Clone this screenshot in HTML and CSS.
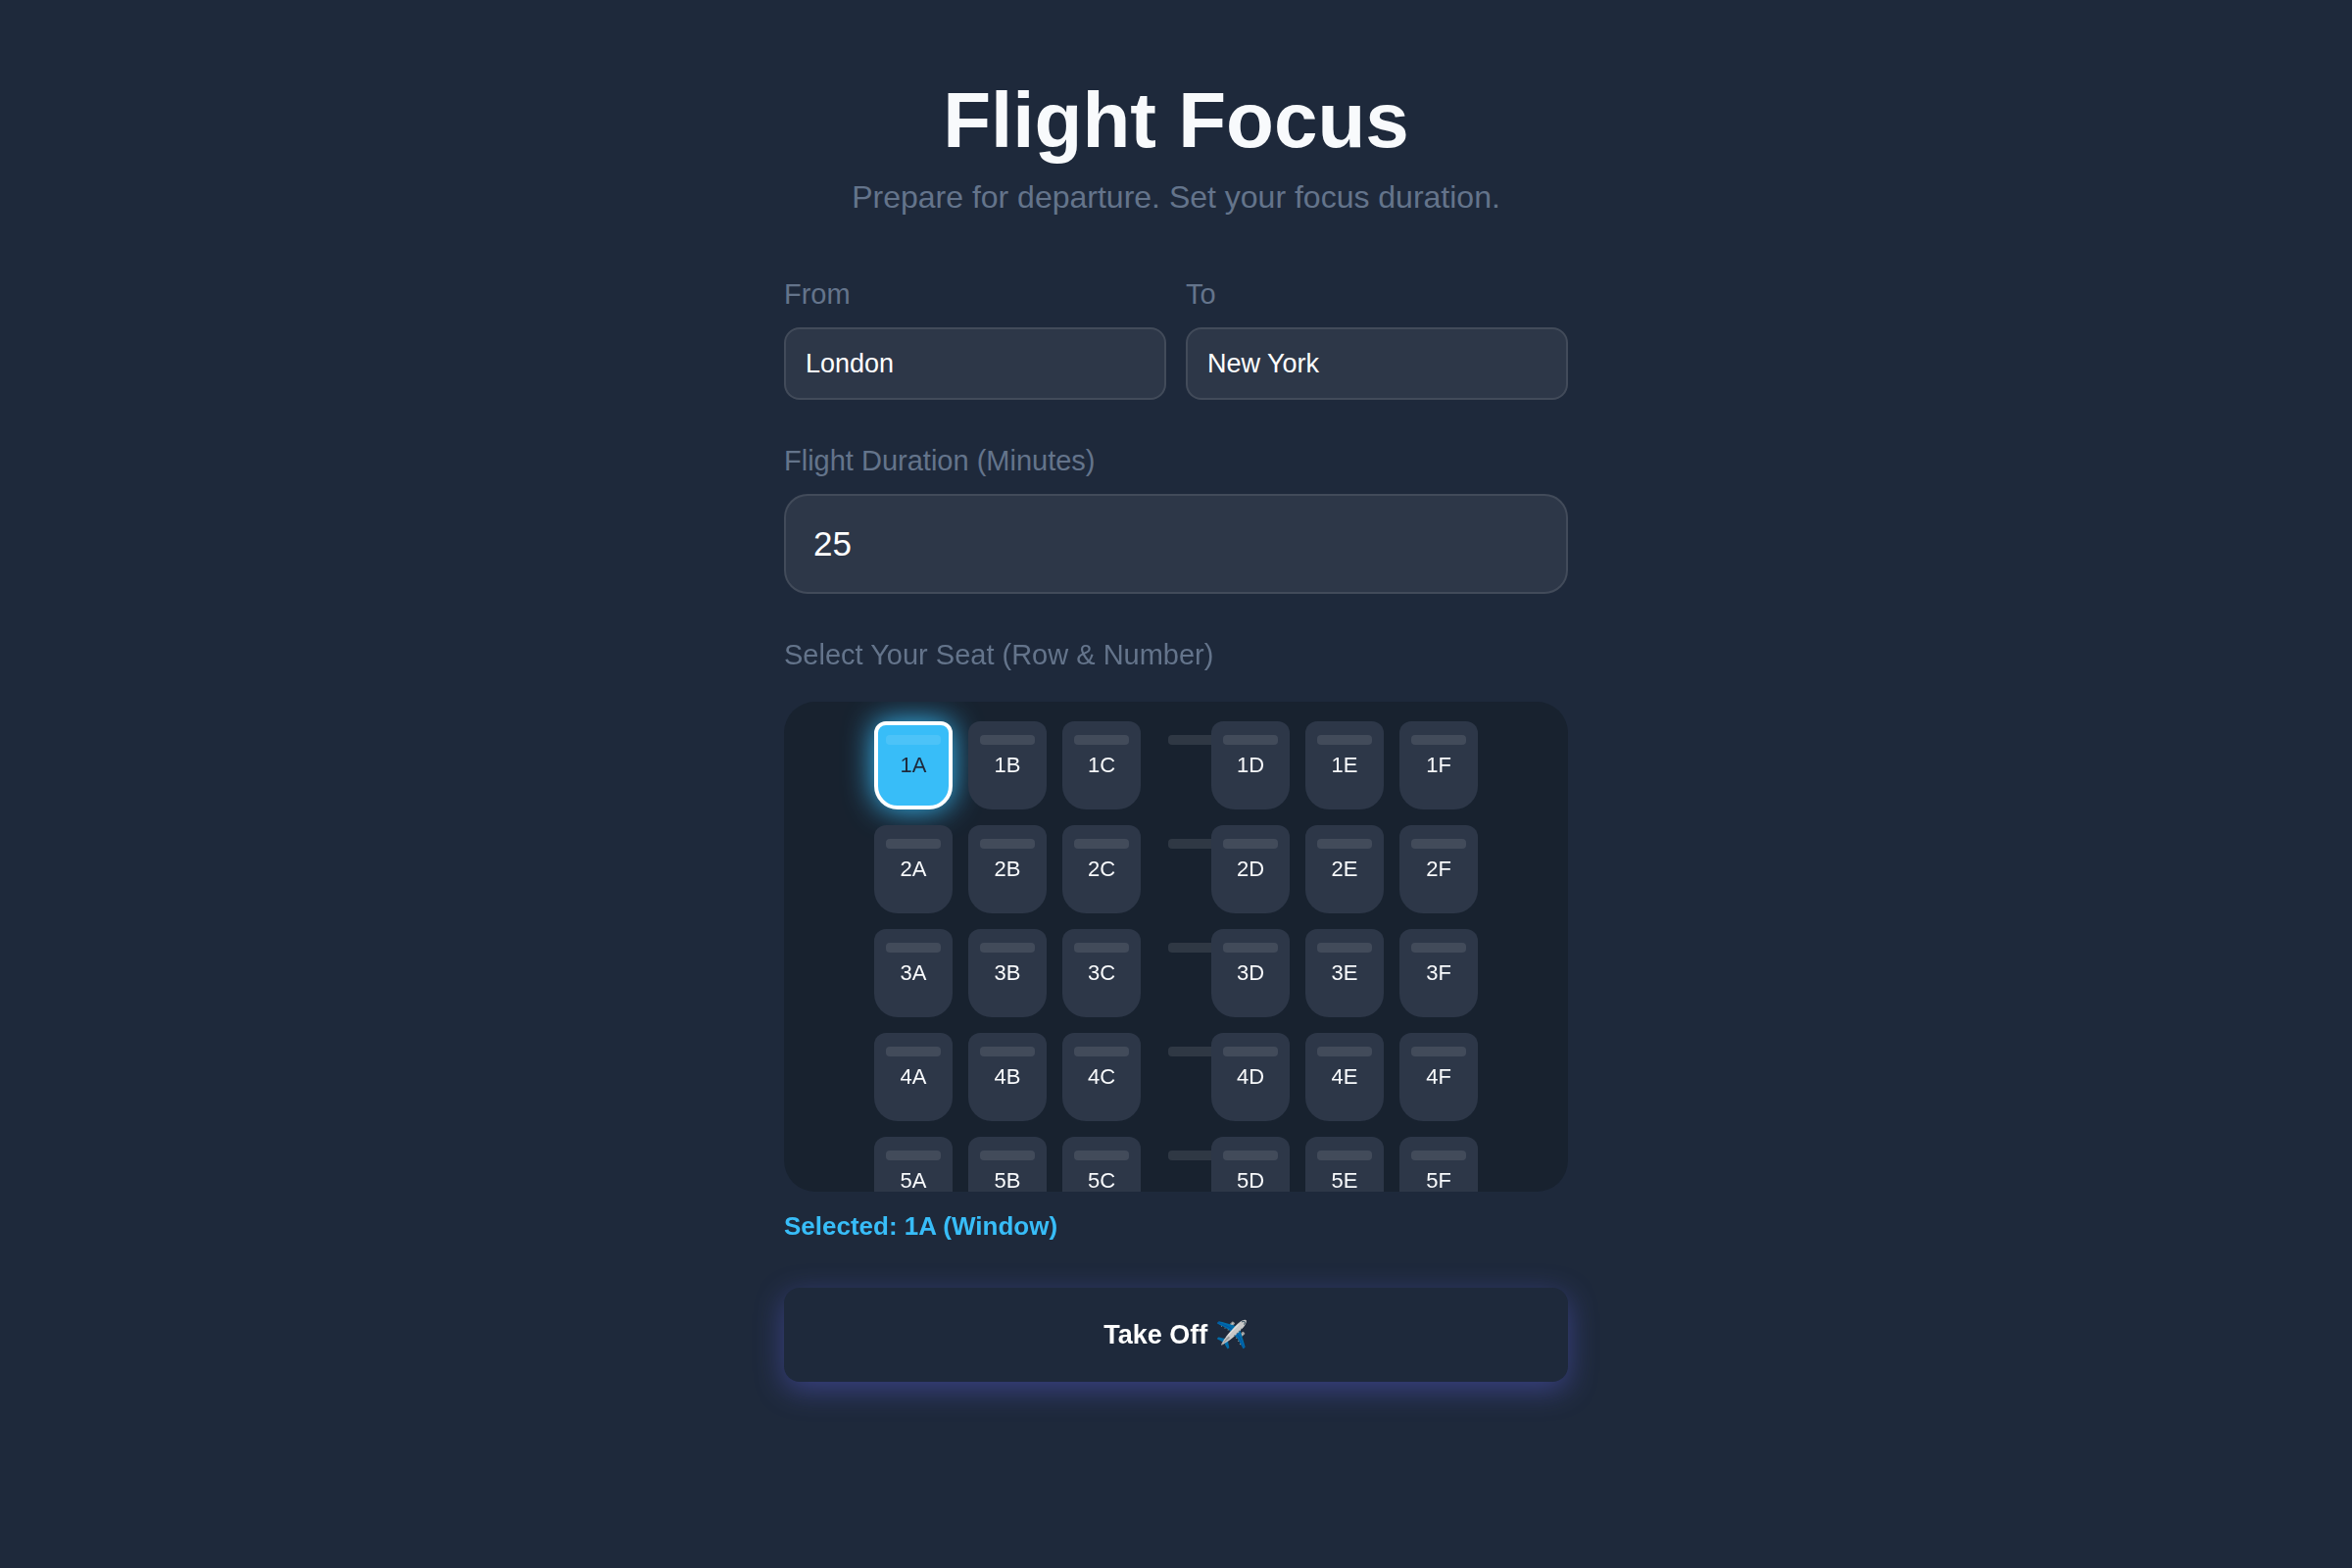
FILE: index.html
```html
<!DOCTYPE html>
<html lang="en">
<head>
<meta charset="utf-8">
<meta name="viewport" content="width=device-width, initial-scale=1">
<title>Flight Focus</title>
<link rel="stylesheet" href="styles.css">
</head>
<body>
<main class="setup">
  <header class="intro">
    <h1 class="title">Flight Focus</h1>
    <p class="subtitle">Prepare for departure. Set your focus duration.</p>
  </header>
  <form class="form">
    <div class="route">
      <div class="field">
        <label class="label" for="from">From</label>
        <input class="input" id="from" type="text" value="London">
      </div>
      <div class="field">
        <label class="label" for="to">To</label>
        <input class="input" id="to" type="text" value="New York">
      </div>
    </div>
    <div class="field">
      <label class="label" for="duration">Flight Duration (Minutes)</label>
      <input class="input input-large" id="duration" type="number" value="25">
    </div>
    <section class="seating">
      <h2 class="label" id="seat-label">Select Your Seat (Row &amp; Number)</h2>
      <div class="cabin" role="group" aria-labelledby="seat-label">
        <div class="row">
          <button type="button" class="seat selected" aria-pressed="true">1A</button>
          <button type="button" class="seat">1B</button>
          <button type="button" class="seat">1C</button>
          <div class="aisle"></div>
          <button type="button" class="seat">1D</button>
          <button type="button" class="seat">1E</button>
          <button type="button" class="seat">1F</button>
        </div>
        <div class="row">
          <button type="button" class="seat">2A</button>
          <button type="button" class="seat">2B</button>
          <button type="button" class="seat">2C</button>
          <div class="aisle"></div>
          <button type="button" class="seat">2D</button>
          <button type="button" class="seat">2E</button>
          <button type="button" class="seat">2F</button>
        </div>
        <div class="row">
          <button type="button" class="seat">3A</button>
          <button type="button" class="seat">3B</button>
          <button type="button" class="seat">3C</button>
          <div class="aisle"></div>
          <button type="button" class="seat">3D</button>
          <button type="button" class="seat">3E</button>
          <button type="button" class="seat">3F</button>
        </div>
        <div class="row">
          <button type="button" class="seat">4A</button>
          <button type="button" class="seat">4B</button>
          <button type="button" class="seat">4C</button>
          <div class="aisle"></div>
          <button type="button" class="seat">4D</button>
          <button type="button" class="seat">4E</button>
          <button type="button" class="seat">4F</button>
        </div>
        <div class="row">
          <button type="button" class="seat">5A</button>
          <button type="button" class="seat">5B</button>
          <button type="button" class="seat">5C</button>
          <div class="aisle"></div>
          <button type="button" class="seat">5D</button>
          <button type="button" class="seat">5E</button>
          <button type="button" class="seat">5F</button>
        </div>
      </div>
      <p class="selection">Selected: 1A (Window)</p>
    </section>
    <button type="button" class="takeoff">Take Off ✈️</button>
  </form>
</main>
</body>
</html>
```
FILE: styles.css
```css
* {
  box-sizing: border-box;
}

body {
  margin: 0;
  min-height: 100vh;
  background: #1e293b;
  color: #f8fafc;
  font-family: "Liberation Sans", Arial, sans-serif;
}

.setup {
  width: 100%;
  max-width: 800px;
  margin: 0 auto;
  padding: 76px 0;
}

.intro {
  margin-bottom: 62px;
  text-align: center;
}

.title {
  margin: 0 0 12px;
  font-size: 80px;
  line-height: 94px;
}

.subtitle {
  margin: 0;
  color: #64748b;
  font-size: 32px;
  line-height: 38px;
}

.form {
  display: flex;
  flex-direction: column;
  gap: 44px;
}

.route {
  display: flex;
  gap: 20px;
}

.field {
  display: flex;
  flex: 1;
  flex-direction: column;
  gap: 16px;
  min-width: 0;
}

.label {
  margin: 0;
  color: #64748b;
  font-size: 29px;
  font-weight: 400;
  line-height: 36px;
}

.input {
  width: 100%;
  height: 74px;
  padding: 0 20px;
  border: 2px solid rgba(255, 255, 255, 0.1);
  border-radius: 16px;
  background: #2d3748;
  color: #fff;
  font-family: inherit;
  font-size: 27px;
}

.input-large {
  height: 102px;
  padding: 0 28px;
  border-radius: 24px;
  font-size: 35px;
  appearance: textfield;
}

.input-large::-webkit-inner-spin-button {
  appearance: none;
  margin: 0;
}

.cabin {
  display: flex;
  flex-direction: column;
  gap: 16px;
  max-height: 500px;
  margin-top: 30px;
  padding: 20px;
  border-radius: 32px;
  background: #18222f;
  overflow-y: auto;
  scrollbar-width: none;
}

.row {
  display: flex;
  flex-shrink: 0;
  justify-content: center;
  gap: 16px;
}

.seat,
.aisle {
  position: relative;
  width: 80px;
  height: 90px;
  padding: 0;
  border: 4px solid transparent;
  border-radius: 12px 12px 24px 24px;
}

.seat {
  background: #2d3748;
  color: #f8fafc;
  font-family: inherit;
  font-size: 22px;
}

.aisle {
  width: 40px;
}

/* Headrest */
.seat::before,
.aisle::before {
  content: "";
  position: absolute;
  top: 10px;
  left: 8px;
  width: 56px;
  height: 10px;
  border-radius: 4px;
  background: rgba(255, 255, 255, 0.1);
}

.selected {
  border-color: #fff;
  background: #38bdf8;
  box-shadow: 0 0 30px #38bdf8;
  color: #1e293b;
}

.selection {
  margin: 20px 0 4px;
  color: #38bdf8;
  font-size: 26px;
  font-weight: 700;
  line-height: 30px;
}

.takeoff {
  width: 100%;
  padding: 32px;
  border: 0;
  border-radius: 16px;
  background: #1e293b;
  box-shadow: 0 8px 30px rgba(99, 102, 241, 0.4);
  color: #fff;
  font-family: inherit;
  font-size: 27px;
  font-weight: 700;
  line-height: 32px;
}
```
